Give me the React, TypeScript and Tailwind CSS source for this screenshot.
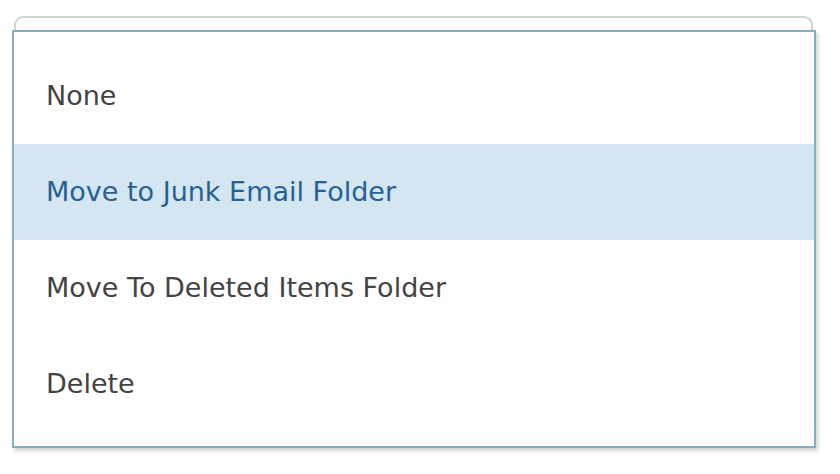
const options = [
  { label: "None", active: false },
  { label: "Move to Junk Email Folder", active: true },
  { label: "Move To Deleted Items Folder", active: false },
  { label: "Delete", active: false },
];

export default function App() {
  return (
    <div className="relative h-[474px] w-[840px] bg-white pt-[16px] font-['DejaVu_Sans',sans-serif]">
      {/* select behind the menu */}
      <div className="ml-[14px] h-[40px] w-[799px] rounded-t-[9px] border-2 border-b-0 border-[#d2d2d2]" />

      {/* open menu */}
      <ul className="absolute left-[12px] top-[30px] w-[804px] border-2 border-[#84afbd] bg-white pt-4 pb-[14px] shadow-[2px_3px_4px_rgba(0,0,0,0.18)]">
        {options.map((option) => (
          <li
            key={option.label}
            className={
              option.active
                ? "flex h-[96px] items-center bg-[#d3e6f2] pl-[32px] text-[27px] text-[#286094]"
                : "flex h-[96px] items-center pl-[32px] text-[27px] text-[#434343]"
            }
          >
            {option.label}
          </li>
        ))}
      </ul>
    </div>
  );
}
